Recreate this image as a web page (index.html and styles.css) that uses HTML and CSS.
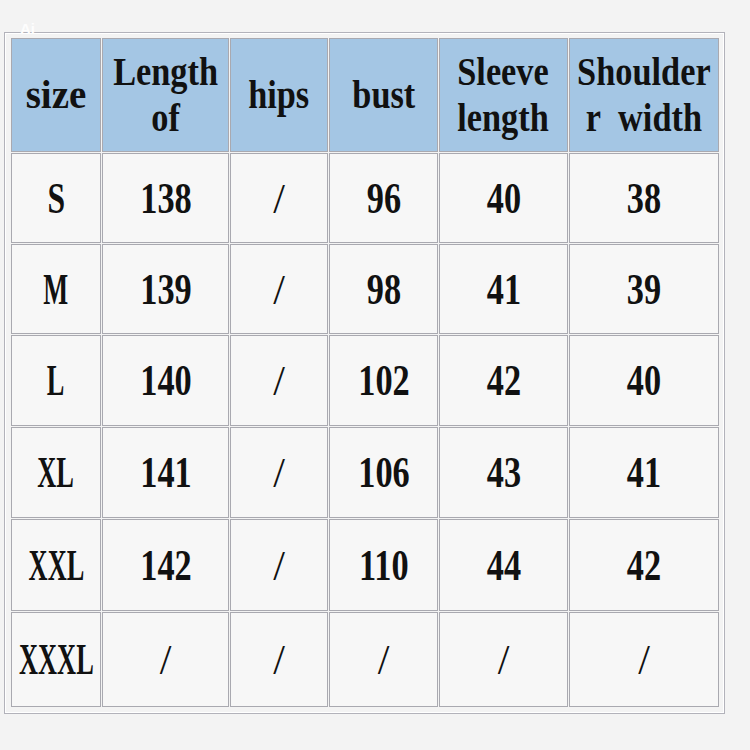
FILE: index.html
```html
<!DOCTYPE html>
<html>
<head>
<meta charset="utf-8">
<link rel="stylesheet" href="styles.css">
</head>
<body>
<div class="mark">Ai</div>
<div class="frame">
<table class="sizes">
<colgroup>
<col class="c1"><col class="c2"><col class="c3"><col class="c4"><col class="c5"><col class="c6">
</colgroup>
<thead>
<tr class="head">
<th><span class="t wide">size</span></th>
<th><span class="t">Length<br>of</span></th>
<th><span class="t">hips</span></th>
<th><span class="t">bust</span></th>
<th><span class="t">Sleeve<br>length</span></th>
<th><span class="t">Shoulder<br>r&nbsp; width</span></th>
</tr>
</thead>
<tbody>
<tr class="r1"><td><span class="n s1">S</span></td><td><span class="n">138</span></td><td><span class="sl">/</span></td><td><span class="n">96</span></td><td><span class="n">40</span></td><td><span class="n">38</span></td></tr>
<tr class="r2"><td><span class="n sz">M</span></td><td><span class="n">139</span></td><td><span class="sl">/</span></td><td><span class="n">98</span></td><td><span class="n">41</span></td><td><span class="n">39</span></td></tr>
<tr class="r3"><td><span class="n sz">L</span></td><td><span class="n">140</span></td><td><span class="sl">/</span></td><td><span class="n">102</span></td><td><span class="n">42</span></td><td><span class="n">40</span></td></tr>
<tr class="r4"><td><span class="n sz">XL</span></td><td><span class="n">141</span></td><td><span class="sl">/</span></td><td><span class="n">106</span></td><td><span class="n">43</span></td><td><span class="n">41</span></td></tr>
<tr class="r5"><td><span class="n sz">XXL</span></td><td><span class="n">142</span></td><td><span class="sl">/</span></td><td><span class="n">110</span></td><td><span class="n">44</span></td><td><span class="n">42</span></td></tr>
<tr class="r6"><td><span class="n sz">XXXL</span></td><td><span class="sl">/</span></td><td><span class="sl">/</span></td><td><span class="sl">/</span></td><td><span class="sl">/</span></td><td><span class="sl">/</span></td></tr>
</tbody>
</table>
</div>
</body>
</html>
```

FILE: styles.css
```css
html, body {
  margin: 0;
  padding: 0;
  background: #f3f3f3;
}
body {
  width: 750px;
  height: 750px;
  padding: 32px 0 0 4px;
  box-sizing: border-box;
  position: relative;
  font-family: "Liberation Serif", "Times New Roman", serif;
  color: #111;
}
.mark {
  position: absolute;
  left: 20px;
  top: 20px;
  font-family: "Liberation Sans", Arial, sans-serif;
  font-size: 15px;
  font-weight: bold;
  color: #fdfdfd;
}
.frame {
  display: inline-block;
  border: 1px solid #b2b2ba;
  box-shadow: inset 0 0 0 1px #ffffff;
  padding: 4px 4px 5px 5px;
}
.sizes {
  border-collapse: separate;
  border-spacing: 1px;
  table-layout: fixed;
  width: 710px;
}
.c1 { width: 90px; }
.c2 { width: 127px; }
.c3 { width: 98px; }
.c4 { width: 109px; }
.c5 { width: 129px; }
.c6 { width: 150px; }
.sizes th, .sizes td {
  box-sizing: border-box;
  border: 1px solid #a9a9b0;
  padding: 0;
  text-align: center;
  vertical-align: middle;
  white-space: nowrap;
  overflow: visible;
}
.sizes th {
  background: #a4c6e4;
  font-size: 39px;
  line-height: 46px;
  font-weight: bold;
}
.sizes td {
  background: #f7f7f7;
  font-size: 44px;
  font-weight: bold;
}
.head { height: 114px; }
.r1 { height: 90px; }
.r2 { height: 90px; }
.r3 { height: 91px; }
.r4 { height: 91px; }
.r5 { height: 92px; }
.r6 { height: 95px; }
.t, .n {
  display: inline-block;
  margin: 0 -60px;
}
.t { transform: scaleX(0.88); }
.t.wide { transform: none; }
.n { transform: scaleX(0.78); }
.n.sz { transform: scaleX(0.6); }
.n.s1 { transform: scaleX(0.72); }
.sl {
  display: inline-block;
  font-weight: normal;
  font-size: 42px;
}
```
